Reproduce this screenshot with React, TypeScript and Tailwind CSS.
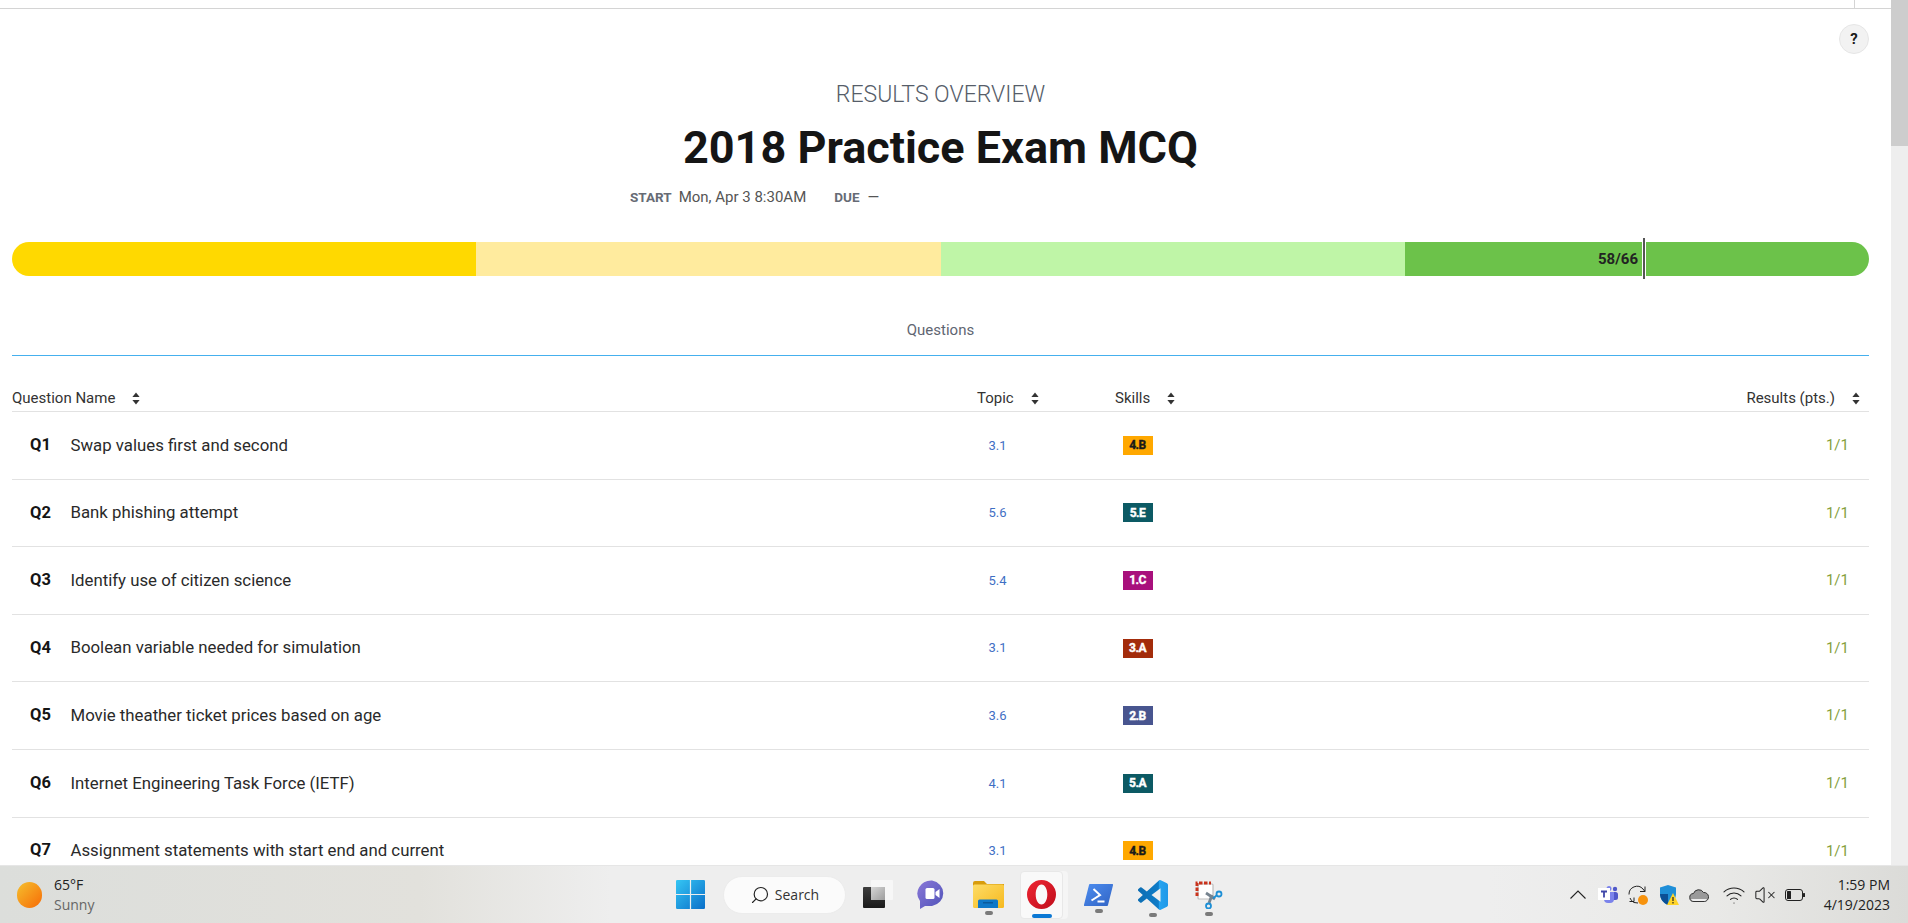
import { Search, Wifi, VolumeX } from "lucide-react";

const rows = [
  { q: "Q1", name: "Swap values first and second", topic: "3.1", skill: "4.B", color: "bg-[#ffa800] text-[#1a1a1a]" },
  { q: "Q2", name: "Bank phishing attempt", topic: "5.6", skill: "5.E", color: "bg-[#0c5a64] text-white" },
  { q: "Q3", name: "Identify use of citizen science", topic: "5.4", skill: "1.C", color: "bg-[#a8107c] text-white" },
  { q: "Q4", name: "Boolean variable needed for simulation", topic: "3.1", skill: "3.A", color: "bg-[#a32c0b] text-white" },
  { q: "Q5", name: "Movie theather ticket prices based on age", topic: "3.6", skill: "2.B", color: "bg-[#48558f] text-white" },
  { q: "Q6", name: "Internet Engineering Task Force (IETF)", topic: "4.1", skill: "5.A", color: "bg-[#0c5a64] text-white" },
  { q: "Q7", name: "Assignment statements with start end and current", topic: "3.1", skill: "4.B", color: "bg-[#ffa800] text-[#1a1a1a]" },
];

function SortIcon() {
  return (
    <svg viewBox="0 0 8 13" className="h-[13px] w-2 text-[#333]" fill="currentColor" aria-hidden>
      <path d="M4 0.5L7.6 5H0.4z" />
      <path d="M4 12.5L0.4 8h7.2z" />
    </svg>
  );
}

function HeaderCell({ label, className }: { label: string; className: string }) {
  return (
    <div className={`flex items-center ${className}`}>
      <span>{label}</span>
      <SortIcon />
    </div>
  );
}

function QuestionRow({ row }: { row: (typeof rows)[number] }) {
  return (
    <div className="flex h-[67.6px] shrink-0 items-center border-b border-[#e2e2e2]">
      <div className="w-[40px] pl-[18px] text-[16.500px] font-bold text-[#151515]">{row.q}</div>
      <div className="ml-[18.5px] w-[917px] text-[16.800px] text-[#2a2a2a]">{row.name}</div>
      <div className="w-[135px] pl-[1px] text-[13px] text-[#3f6fc4]">{row.topic}</div>
      <div className={`flex h-[19px] w-[30px] items-center justify-center text-[12px] font-bold tracking-[-0.5px] [-webkit-text-stroke:0.4px_currentColor] ${row.color}`}>
        {row.skill}
      </div>
      <div className="ml-auto pr-[20px] text-[15px] text-[#869f3e]">1/1</div>
    </div>
  );
}

function WindowsLogo() {
  return (
    <svg viewBox="0 0 24 24" className="h-[29px] w-[29px]" aria-hidden>
      <defs>
        <linearGradient id="win" x1="0" y1="0" x2="1" y2="1">
          <stop offset="0" stopColor="#35c6f4" />
          <stop offset="1" stopColor="#0a6fc9" />
        </linearGradient>
      </defs>
      <path fill="url(#win)" d="M0 1a1 1 0 011-1h10.500v11.500H0zM12.500 0H23a1 1 0 011 1v10.500H12.500zM0 12.500h11.500V24H1a1 1 0 01-1-1zM12.500 12.500H24V23a1 1 0 01-1 1H12.500z" />
    </svg>
  );
}

function TaskViewIcon() {
  return (
    <svg viewBox="0 0 30 29" className="h-[29px] w-[30px]" aria-hidden>
      <defs>
        <linearGradient id="tvfront" x1="0" y1="0" x2="0" y2="1">
          <stop offset="0" stopColor="#3d3d3d" />
          <stop offset="1" stopColor="#1a1a1a" />
        </linearGradient>
        <linearGradient id="tvmid" x1="0" y1="0" x2="1" y2="1">
          <stop offset="0" stopColor="#d6d6d6" />
          <stop offset="1" stopColor="#9d9d9d" />
        </linearGradient>
      </defs>
      <rect x="8" y="0" width="22" height="20" rx="1" fill="#f7f7f7" />
      <rect x="0" y="7" width="22" height="21" rx="1" fill="url(#tvfront)" />
      <rect x="8" y="7" width="14" height="13" fill="url(#tvmid)" />
    </svg>
  );
}

function ChatIcon() {
  return (
    <svg viewBox="0 0 29 29" className="h-[29px] w-[29px]" aria-hidden>
      <defs>
        <linearGradient id="chat" x1="0" y1="0" x2="1" y2="1">
          <stop offset="0" stopColor="#8a78d8" />
          <stop offset="1" stopColor="#4f52b8" />
        </linearGradient>
      </defs>
      <path fill="url(#chat)" d="M15 0.500a14 13 0 010 25.500H8l-5 3v-8A14 13 0 0115 0.500z" />
      <rect x="8.500" y="8" width="9" height="11" rx="1.500" fill="#fff" />
      <path fill="#fff" d="M18.500 12l4-3v9l-4-3z" />
    </svg>
  );
}

function FolderIcon() {
  return (
    <svg viewBox="0 0 31 27" className="h-[27px] w-[31px]" aria-hidden>
      <defs>
        <linearGradient id="folder" x1="0" y1="0" x2="1" y2="1">
          <stop offset="0" stopColor="#fddc66" />
          <stop offset="1" stopColor="#f6b91f" />
        </linearGradient>
      </defs>
      <path fill="#d89c0c" d="M0 2a2 2 0 012-2h9l3 3h17v6H0z" />
      <rect x="0" y="3.500" width="31" height="23.500" rx="1.500" fill="url(#folder)" />
      <path fill="#0f78c8" d="M5 27v-7A1.500 1.500 0 016.500 18.500h17a1.500 1.500 0 011.500 1.500v7z" />
      <rect x="10" y="21" width="10" height="1.500" fill="#0a5a9c" />
    </svg>
  );
}

function OperaIcon() {
  return (
    <svg viewBox="0 0 29 29" className="h-[29px] w-[29px]" aria-hidden>
      <defs>
        <linearGradient id="opera" x1="0" y1="0" x2="1" y2="1">
          <stop offset="0" stopColor="#ee2532" />
          <stop offset="1" stopColor="#c00e1c" />
        </linearGradient>
      </defs>
      <path
        fill="url(#opera)"
        fillRule="evenodd"
        d="M14.500 0a14.500 14.500 0 100 29 14.500 14.500 0 000-29zM14.500 4.500c3.400 0 5.800 4.500 5.800 10s-2.400 10-5.800 10-5.800-4.500-5.800-10 2.400-10 5.800-10z"
      />
    </svg>
  );
}

function PowerShellIcon() {
  return (
    <svg viewBox="0 0 29 22" className="h-[22px] w-[29px]" aria-hidden>
      <defs>
        <linearGradient id="ps" x1="0" y1="0" x2="1" y2="1">
          <stop offset="0" stopColor="#4c8df0" />
          <stop offset="1" stopColor="#3264c4" />
        </linearGradient>
      </defs>
      <path fill="url(#ps)" d="M6 0h22a1 1 0 011 1.300L24 21a1 1 0 01-1 1H1a1 1 0 01-1-1.300L5 1a1 1 0 011-1z" />
      <path fill="none" stroke="#fff" strokeWidth="2" d="M9.500 5l6.500 6-8.500 5.500M13.500 17.500h7" />
    </svg>
  );
}

function VsCodeIcon() {
  return (
    <svg viewBox="0 0 24 24" className="h-[30px] w-[30px]" aria-hidden>
      <defs>
        <linearGradient id="vscode" x1="0" y1="0" x2="1" y2="0">
          <stop offset="0" stopColor="#0d6eb3" />
          <stop offset="0.68" stopColor="#0e7cc8" />
          <stop offset="0.7" stopColor="#25a4f0" />
          <stop offset="1" stopColor="#1f98e8" />
        </linearGradient>
      </defs>
      <path
        fill="url(#vscode)"
        d="M23.15 2.587L18.21.21a1.494 1.494 0 0 0-1.705.29l-9.46 8.63-4.12-3.128a.999.999 0 0 0-1.276.057L.327 7.261A1 1 0 0 0 .326 8.74L3.899 12 .326 15.26a1 1 0 0 0 .001 1.479L1.65 17.94a.999.999 0 0 0 1.276.057l4.12-3.128 9.46 8.63a1.492 1.492 0 0 0 1.704.29l4.942-2.377A1.5 1.5 0 0 0 24 20.06V3.939a1.5 1.5 0 0 0-.85-1.352zm-5.146 14.861L10.826 12l7.178-5.448v10.896z"
      />
    </svg>
  );
}

function SnipIcon() {
  return (
    <svg viewBox="0 0 28 28" className="h-[28px] w-[28px]" fill="none" aria-hidden>
      <rect x="3" y="3" width="15" height="15" rx="1" fill="#ffffff" stroke="#bdbdbd" strokeWidth="1.200" />
      <path stroke="#c9331c" strokeWidth="3" strokeDasharray="3.500 1.500" d="M2 15V2H16" />
      <path stroke="#76838f" strokeWidth="2.800" d="M11 12l9 6" />
      <path stroke="#76838f" strokeWidth="2.800" d="M17 14l-3 8" />
      <circle cx="24" cy="13" r="2.500" stroke="#1d8fd6" strokeWidth="1.800" />
      <circle cx="13.500" cy="25" r="2.500" stroke="#1d8fd6" strokeWidth="1.800" />
      <path stroke="#1d8fd6" strokeWidth="1.800" d="M21.500 14.500l-3.500 3" />
    </svg>
  );
}

function ChevronTray() {
  return (
    <svg viewBox="0 0 16 9" className="h-[9px] w-4" fill="none" stroke="#222" strokeWidth="1.100" aria-hidden>
      <path d="M0.500 8.500L8 1l7.500 7.500" />
    </svg>
  );
}

function TeamsTray() {
  return (
    <svg viewBox="0 0 20 17" className="h-[17px] w-5" aria-hidden>
      <circle cx="17" cy="3" r="2.200" fill="#5059c9" />
      <rect x="13" y="6" width="7" height="8" rx="2.500" fill="#5059c9" />
      <circle cx="11" cy="2.500" r="2.500" fill="#7b83eb" />
      <path fill="#7b83eb" d="M6 6h10v7a4 4 0 01-4 4h-2a4 4 0 01-4-4z" />
      <rect x="0" y="2" width="12" height="12" fill="#fff" />
      <path stroke="#3f46a8" strokeWidth="1.800" d="M3 5.500h6M6 5.500V11.500" />
    </svg>
  );
}

function SyncTray() {
  return (
    <svg viewBox="0 0 20 20" className="h-5 w-5" aria-hidden>
      <path fill="none" stroke="#222" strokeWidth="1" d="M1 9.500a8 8 0 0114-5.500l2 2.500M17 1.500v5h-5" />
      <path fill="none" stroke="#222" strokeWidth="1" d="M2 13a8 8 0 004 4.500l4 .5M1.500 16.500h4.500v-4" />
      <circle cx="15" cy="15" r="5" fill="#f7930e" />
    </svg>
  );
}

function ShieldTray() {
  return (
    <svg viewBox="0 0 20 20" className="h-5 w-5" aria-hidden>
      <path fill="#1f8fd8" d="M9 0l8 2.500V9c0 5-3.500 9-8 11-4.500-2-8-6-8-11V2.500z" />
      <path fill="#0b4f96" d="M1 9h8v11c-4.500-2-8-6-8-11z" />
      <path fill="#ffd429" d="M14 8l6 12H8z" />
      <path stroke="#222" strokeWidth="1.200" d="M14 12v4M14 17v1.500" />
    </svg>
  );
}

function CloudTray() {
  return (
    <svg viewBox="0 0 20 14" className="h-[14px] w-5" aria-hidden>
      <path fill="#9a9a9a" stroke="#333" strokeWidth="1" d="M5 13.500a4 4 0 01-.5-8 5.500 5.500 0 0110-1 4.500 4.500 0 011 9z" />
      <path fill="#eee" d="M2 11h16a3 3 0 01-3 2H5a3 3 0 01-3-2z" />
    </svg>
  );
}

function BatteryTray() {
  return (
    <svg viewBox="0 0 20 12" className="h-3 w-5" aria-hidden>
      <rect x="0.500" y="0.500" width="17" height="11" rx="2.500" fill="none" stroke="#222" />
      <rect x="2" y="2" width="4" height="8" rx="0.500" fill="#222" />
      <rect x="18" y="4" width="2" height="4" rx="0.500" fill="#222" />
    </svg>
  );
}

function TaskbarItem({ children, className }: { children: React.ReactNode; className: string }) {
  return (
    <div className={`relative flex items-center justify-center ${className}`}>
      {children}
      <span className="absolute bottom-[-7px] h-[4px] w-2 rounded-full bg-[#7a7a7a]" />
    </div>
  );
}

export default function App() {
  return (
    <div className="flex h-[923px] w-[1908px] flex-col overflow-hidden bg-white font-['Roboto',sans-serif]">
      <div className="flex h-[865px] shrink-0">
        <div className="flex w-[1891px] flex-col overflow-hidden">
          <div className="h-[9px] shrink-0 border-b border-[#d4d4d4]">
            <div className="ml-[1854px] h-2 w-px bg-[#d4d4d4]" />
          </div>

          <div className="flex justify-end pr-[22px] pt-[15px]">
            <div className="flex h-[30px] w-[30px] items-center justify-center rounded-full border border-[#e6e6e6] bg-[#f2f2f2] text-[15px] font-bold text-[#1a1a1a]">
              ?
            </div>
          </div>

          <div className="flex flex-col items-center pr-[22px] pl-[12px] pt-[27px]">
            <div className="text-[23px] leading-[28px] font-light text-[#565d69]">RESULTS OVERVIEW</div>
            <h1 className="mt-[9px] text-[45px] leading-[60px] font-bold text-[#151515]">2018 Practice Exam MCQ</h1>
          </div>
          <div className="mt-[8px] flex h-[22px] items-center pl-[630px] text-[15px] text-[#555]">
            <span className="text-[13.500px] font-bold text-[#666b75]">START</span>
            <span className="ml-[7px]">Mon, Apr 3 8:30AM</span>
            <span className="ml-[28px] text-[13.500px] font-bold text-[#666b75]">DUE</span>
            <span className="ml-[8px]">—</span>
          </div>

          <div className="ml-[12px] mr-[22px] mt-[34px]">
            <div className="relative">
              <div className="flex h-[34px] overflow-hidden rounded-full">
                <div className="w-1/4 bg-[#ffd900]" />
                <div className="w-1/4 bg-[#ffeb9e]" />
                <div className="w-1/4 bg-[#bff5a7]" />
                <div className="w-1/4 bg-[#6cc24a]" />
              </div>
              <div className="absolute inset-y-0 right-[231px] flex items-center text-[15px] font-bold text-[#222]">58/66</div>
              <div className="absolute -top-[4px] left-[1631px] h-[41px] w-[2px] bg-[#555] outline outline-white" />
            </div>
          </div>

          <div className="ml-[12px] mr-[22px] mt-[43px] flex h-[37px] shrink-0 justify-center border-b border-[#45b0ee] text-[15px] text-[#5f6672]">
            Questions
          </div>

          <div className="ml-[12px] mr-[22px] mt-[32px] flex flex-col">
            <div className="flex h-[24px] shrink-0 items-center border-b border-[#e2e2e2] pb-[2px] text-[15px] text-[#333]">
              <HeaderCell label="Question Name" className="w-[965px] gap-[17px]" />
              <HeaderCell label="Topic" className="w-[138px] gap-[17px]" />
              <HeaderCell label="Skills" className="gap-[17px]" />
              <HeaderCell label="Results (pts.)" className="ml-auto gap-[17px] pr-[9px]" />
            </div>
            {rows.map((row) => (
              <QuestionRow key={row.q} row={row} />
            ))}
          </div>
        </div>

        <div className="w-[17px] shrink-0 bg-[#eeeeee]">
          <div className="h-[146px] bg-[#cdcdcd]" />
        </div>
      </div>

      <div className="flex h-[58px] shrink-0 items-center border-t border-[#e6e6e6] bg-[linear-gradient(90deg,#dcdedb_0%,#e2e1dc_22%,#eeeeee_32%,#eeeeee_78%,#e9e9e7_90%,#dbdbd8_100%)] font-['Open_Sans',sans-serif]">
        <div className="flex w-[676px] shrink-0 items-center pl-[17px]">
          <div className="h-[26px] w-[25px] rounded-full bg-[linear-gradient(135deg,#f5c02e,#f76b06)]" />
          <div className="ml-[12px] flex flex-col">
            <span className="text-[14px] leading-[20px] text-[#222]">65°F</span>
            <span className="text-[14px] leading-[20px] text-[#666]">Sunny</span>
          </div>
        </div>

        <WindowsLogo />

        <div className="ml-[18px] flex h-[38px] w-[123px] items-center justify-center gap-[5px] rounded-full border border-[#ececec] bg-[#fbfbfb] text-[14px] text-[#333]">
          <Search className="h-5 w-5 -scale-x-100 text-[#222]" strokeWidth={1.4} />
          Search
        </div>

        <div className="ml-[17px]"><TaskViewIcon /></div>
        <div className="ml-[24px]"><ChatIcon /></div>
        <TaskbarItem className="ml-[27px]"><FolderIcon /></TaskbarItem>

        <div className="relative ml-[16px] flex h-[48px] w-[43px] items-center justify-center rounded-[4px] border border-[#e8e8e8] bg-[#f9f9f9] shadow-[5px_0_0_#f5f5f5]">
          <OperaIcon />
          <span className="absolute bottom-[0px] h-[4px] w-5 rounded-full bg-[#0b78d4]" />
        </div>

        <TaskbarItem className="ml-[21px]"><PowerShellIcon /></TaskbarItem>
        <TaskbarItem className="ml-[25px]"><VsCodeIcon /></TaskbarItem>
        <TaskbarItem className="ml-[27px]"><SnipIcon /></TaskbarItem>

        <div className="ml-auto flex items-center pr-[18px] text-[#222]">
          <ChevronTray />
          <div className="ml-[12px]"><TeamsTray /></div>
          <div className="ml-[10px]"><SyncTray /></div>
          <div className="ml-[11px]"><ShieldTray /></div>
          <div className="ml-[10px]"><CloudTray /></div>
          <Wifi className="ml-[13px] h-6 w-6" strokeWidth={1.1} />
          <VolumeX className="ml-[8px] h-[22px] w-[22px]" strokeWidth={1.1} />
          <div className="ml-[9px] flex items-center"><BatteryTray /></div>
          <div className="ml-[19px] flex flex-col items-end text-[14px] leading-[20px] text-[#222]">
            <span>1:59 PM</span>
            <span>4/19/2023</span>
          </div>
        </div>
      </div>
    </div>
  );
}
